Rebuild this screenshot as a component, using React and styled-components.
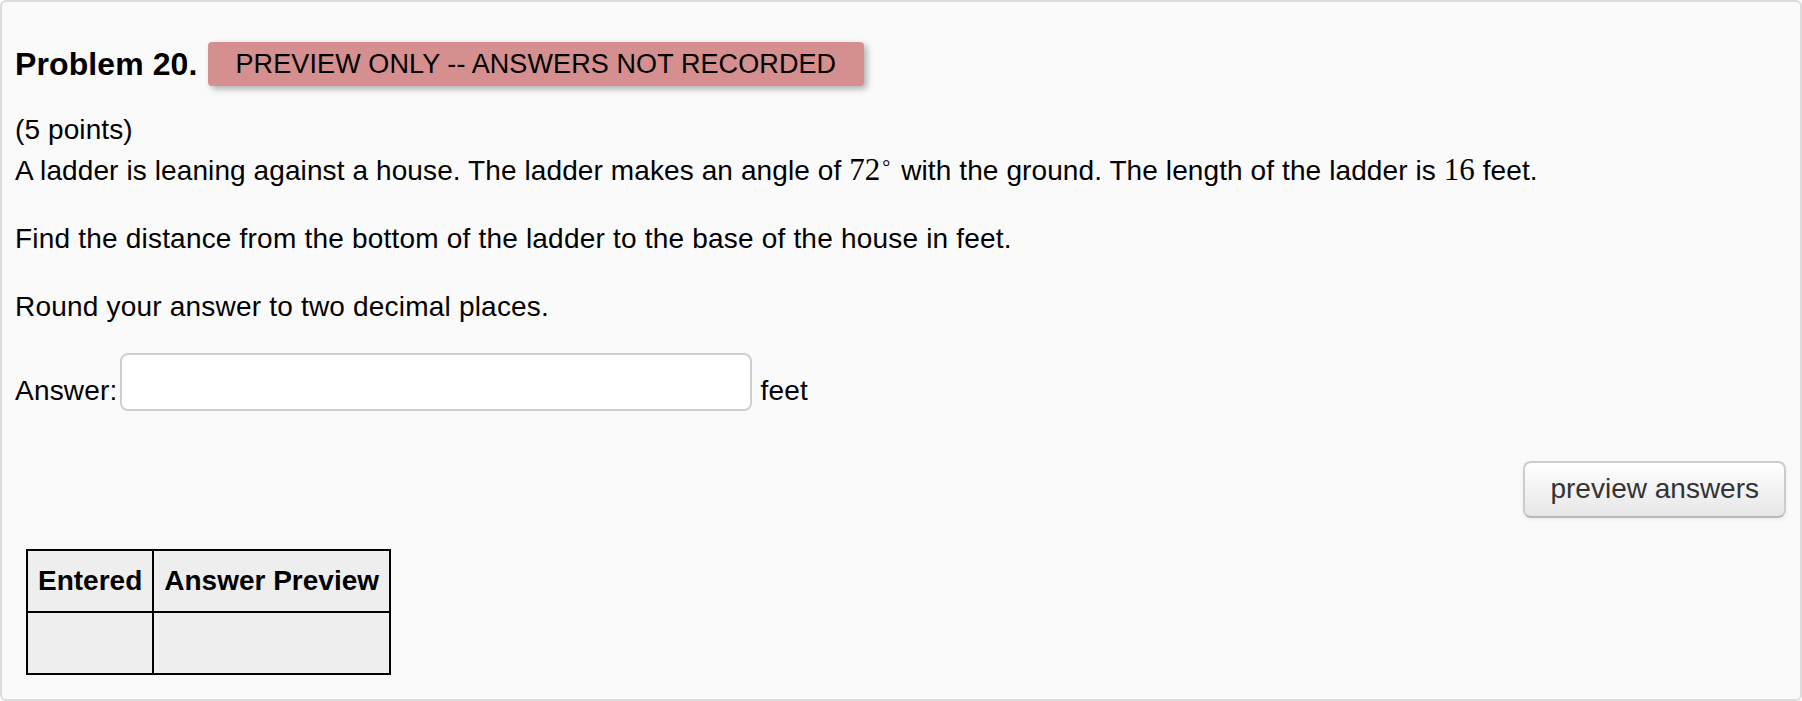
import React from 'react'
import styled, { createGlobalStyle } from 'styled-components'

const SANS = `"Liberation Sans", Arial, Helvetica, sans-serif`
const SERIF = `"Liberation Serif", "Times New Roman", serif`

const GlobalStyle = createGlobalStyle`
  html, body {
    margin: 0;
    padding: 0;
    background: #fff;
  }
  body {
    font-family: ${SANS};
    font-size: 28px;
    line-height: 40px;
    color: #000;
  }
`

const Panel = styled.div`
  box-sizing: border-box;
  width: 100%;
  background: #fafafa;
  border: 2px solid #dcdcdc;
  border-radius: 6px;
  padding: 40px 14px 24px 13px;
`

const Header = styled.div`
  display: flex;
  align-items: center;
  gap: 10px;
  height: 44px;
  margin-bottom: 24px;
`

const Title = styled.span`
  font-size: 32px;
  font-weight: bold;
  line-height: 40px;
  letter-spacing: 0.1px;
`

const Badge = styled.span`
  box-sizing: border-box;
  height: 44px;
  padding: 1px 28px 0;
  font-size: 27px;
  line-height: 43px;
  letter-spacing: 0.1px;
  background: #d68f8f;
  border-radius: 4px;
  box-shadow: 3px 3px 6px rgba(0, 0, 0, 0.3);
`

const Para = styled.div`
  margin-top: ${({ $gap }) => $gap || 0}px;
  letter-spacing: ${({ $spacing }) => $spacing ?? 0.2}px;
`

const MathNum = styled.span`
  font-family: ${SERIF};
  font-size: 31px;
  letter-spacing: 0;
`

const Degree = styled.sup`
  font-family: ${SERIF};
  font-size: 20px;
  line-height: 0;
  vertical-align: 6px;
  margin-left: 2px;
  margin-right: 3px;
`

const AnswerRow = styled.div`
  display: flex;
  align-items: flex-end;
  margin-top: 26px;
  letter-spacing: 0.2px;
`

const AnswerInput = styled.input`
  box-sizing: border-box;
  width: 632px;
  height: 58px;
  margin: 0 9px 0 2px;
  background: #fff;
  border: 2px solid #cfcfcf;
  border-radius: 8px;
  font-family: ${SANS};
  font-size: 28px;
  padding: 0 10px;
  outline: none;
`

const ButtonRow = styled.div`
  display: flex;
  justify-content: flex-end;
  margin-top: 50px;
`

const PreviewButton = styled.button`
  font-family: ${SANS};
  font-size: 28px;
  line-height: 40px;
  color: #333;
  padding: 6px 25px 7px;
  background: linear-gradient(#ffffff, #e6e6e6);
  border: 2px solid #cccccc;
  border-bottom-color: #b8b8b8;
  border-radius: 8px;
  box-shadow: 0 2px 4px rgba(0, 0, 0, 0.05);
  cursor: pointer;
`

const Results = styled.table`
  margin: 31px 0 0 11px;
  border-collapse: collapse;
  background: #eeeeee;

  th, td {
    border: 2px solid #000;
    padding: 10px;
    line-height: 40px;
    text-align: left;
  }

  th {
    font-weight: bold;
  }
`

export default function App () {
  return (
    <>
      <GlobalStyle />
      <Panel>
        <Header>
          <Title>Problem 20.</Title>
          <Badge>PREVIEW ONLY -- ANSWERS NOT RECORDED</Badge>
        </Header>
        <Para $spacing={0.1}>
          (5 points)
          <br />
          A ladder is leaning against a house. The ladder makes an angle of{' '}
          <MathNum>72</MathNum><Degree>°</Degree> with the ground. The length of the ladder is{' '}
          <MathNum>16</MathNum> feet.
        </Para>
        <Para $gap={28}>
          Find the distance from the bottom of the ladder to the base of the house in feet.
        </Para>
        <Para $gap={28}>Round your answer to two decimal places.</Para>
        <AnswerRow>
          <span>Answer:</span>
          <AnswerInput type='text' />
          <span>feet</span>
        </AnswerRow>
        <ButtonRow>
          <PreviewButton>preview answers</PreviewButton>
        </ButtonRow>
        <Results>
          <thead>
            <tr>
              <th>Entered</th>
              <th>Answer Preview</th>
            </tr>
          </thead>
          <tbody>
            <tr>
              <td>&nbsp;</td>
              <td>&nbsp;</td>
            </tr>
          </tbody>
        </Results>
      </Panel>
    </>
  )
}
